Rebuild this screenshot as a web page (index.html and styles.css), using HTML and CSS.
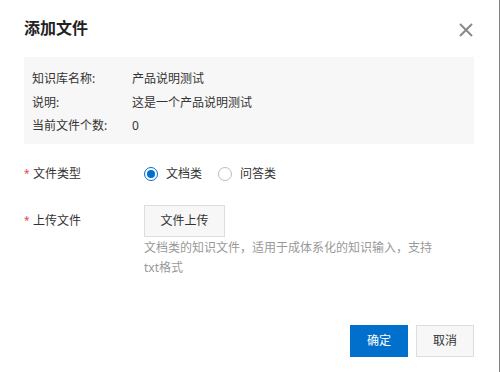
FILE: index.html
```html
<!DOCTYPE html>
<html lang="zh-CN">
<head>
<meta charset="utf-8">
<title>添加文件</title>
<link rel="stylesheet" href="styles.css">
</head>
<body>
<div class="dialog">
  <div class="header">
    <h1 class="title">添加文件</h1>
    <span class="close" aria-label="关闭">
      <svg width="14" height="14" viewBox="0 0 14 14"><path d="M1 1L13 13M13 1L1 13" stroke="#8a8a8a" stroke-width="2" fill="none"/></svg>
    </span>
  </div>
  <div class="info">
    <div class="info-row"><span class="info-label">知识库名称:</span><span class="info-value">产品说明测试</span></div>
    <div class="info-row"><span class="info-label">说明:</span><span class="info-value">这是一个产品说明测试</span></div>
    <div class="info-row"><span class="info-label">当前文件个数:</span><span class="info-value">0</span></div>
  </div>
  <div class="form">
    <div class="form-row row-type">
      <div class="form-label"><span class="req">*</span>文件类型</div>
      <div class="form-control radios">
        <label class="radio checked"><span class="radio-circle"></span>文档类</label>
        <label class="radio"><span class="radio-circle"></span>问答类</label>
      </div>
    </div>
    <div class="form-row row-upload">
      <div class="form-label label-upload"><span class="req">*</span>上传文件</div>
      <div class="form-control">
        <button class="btn btn-default upload-btn">文件上传</button>
        <p class="hint">文档类的知识文件，适用于成体系化的知识输入，支持txt格式</p>
      </div>
    </div>
  </div>
  <div class="footer">
    <button class="btn btn-primary">确定</button>
    <button class="btn btn-default">取消</button>
  </div>
</div>
</body>
</html>
```
FILE: styles.css
```css
html, body {
  margin: 0;
  padding: 0;
  background: #fff;
}
body {
  font-family: "Noto Sans", "Noto Sans CJK SC", sans-serif;
  font-size: 12px;
  color: #333;
}
.dialog {
  box-sizing: border-box;
  width: 500px;
  height: 372px;
  border-right: 1px solid #808080;
  padding: 16px 25px 0 24px;
  background: #fff;
}
.header {
  display: flex;
  justify-content: space-between;
  align-items: center;
  height: 24px;
}
.title {
  margin: 0;
  font-size: 16px;
  font-weight: bold;
  line-height: 24px;
  color: #222;
}
.close {
  display: flex;
  width: 14px;
  height: 14px;
  margin-top: 4px;
  margin-right: 1px;
}
.info {
  margin-top: 17px;
  background: #f7f7f7;
  padding: 10px 8px 6.5px;
  height: 70.5px;
}
.info-row {
  display: flex;
  line-height: 23.5px;
  height: 23.5px;
}
.info-label {
  width: 100px;
  flex: none;
}
.form {
  margin-top: 20px;
}
.form-row {
  display: flex;
}
.form-label {
  width: 120px;
  flex: none;
  line-height: 20px;
}
.req {
  color: #e5484d;
  display: inline-block;
  width: 9px;
  font-size: 10px;
  vertical-align: top;
  line-height: 18px;
}
.label-upload .req {
  line-height: 30px;
}
.radios {
  display: flex;
  align-items: center;
  height: 20px;
}
.radio {
  display: flex;
  align-items: center;
  margin-right: 16px;
  line-height: 20px;
}
.radio-circle {
  box-sizing: border-box;
  width: 14px;
  height: 14px;
  border: 1px solid #bdbdbd;
  border-radius: 50%;
  margin-right: 8px;
  background: #fff;
  position: relative;
}
.radio.checked .radio-circle {
  border-color: #0070cc;
}
.radio.checked .radio-circle::after {
  content: "";
  position: absolute;
  left: 2px;
  top: 2px;
  width: 8px;
  height: 8px;
  border-radius: 50%;
  background: #0070cc;
}
.row-upload {
  margin-top: 21px;
}
.label-upload {
  line-height: 32px;
}
.btn {
  box-sizing: border-box;
  height: 32px;
  font-family: inherit;
  font-size: 12px;
  line-height: 30px;
  padding: 0;
  border: 1px solid #ddd;
  border-radius: 0;
  cursor: pointer;
}
.btn-default {
  background: #f7f7f7;
  color: #333;
}
.btn-primary {
  background: #0070cc;
  border-color: #0070cc;
  color: #fff;
}
.upload-btn {
  width: 81px;
  display: block;
}
.hint {
  margin: 1px 0 0;
  width: 300px;
  line-height: 20px;
  color: #999;
}
.footer {
  display: flex;
  justify-content: flex-end;
  gap: 8px;
  margin-top: 47px;
}
.footer .btn {
  width: 58px;
}
```
